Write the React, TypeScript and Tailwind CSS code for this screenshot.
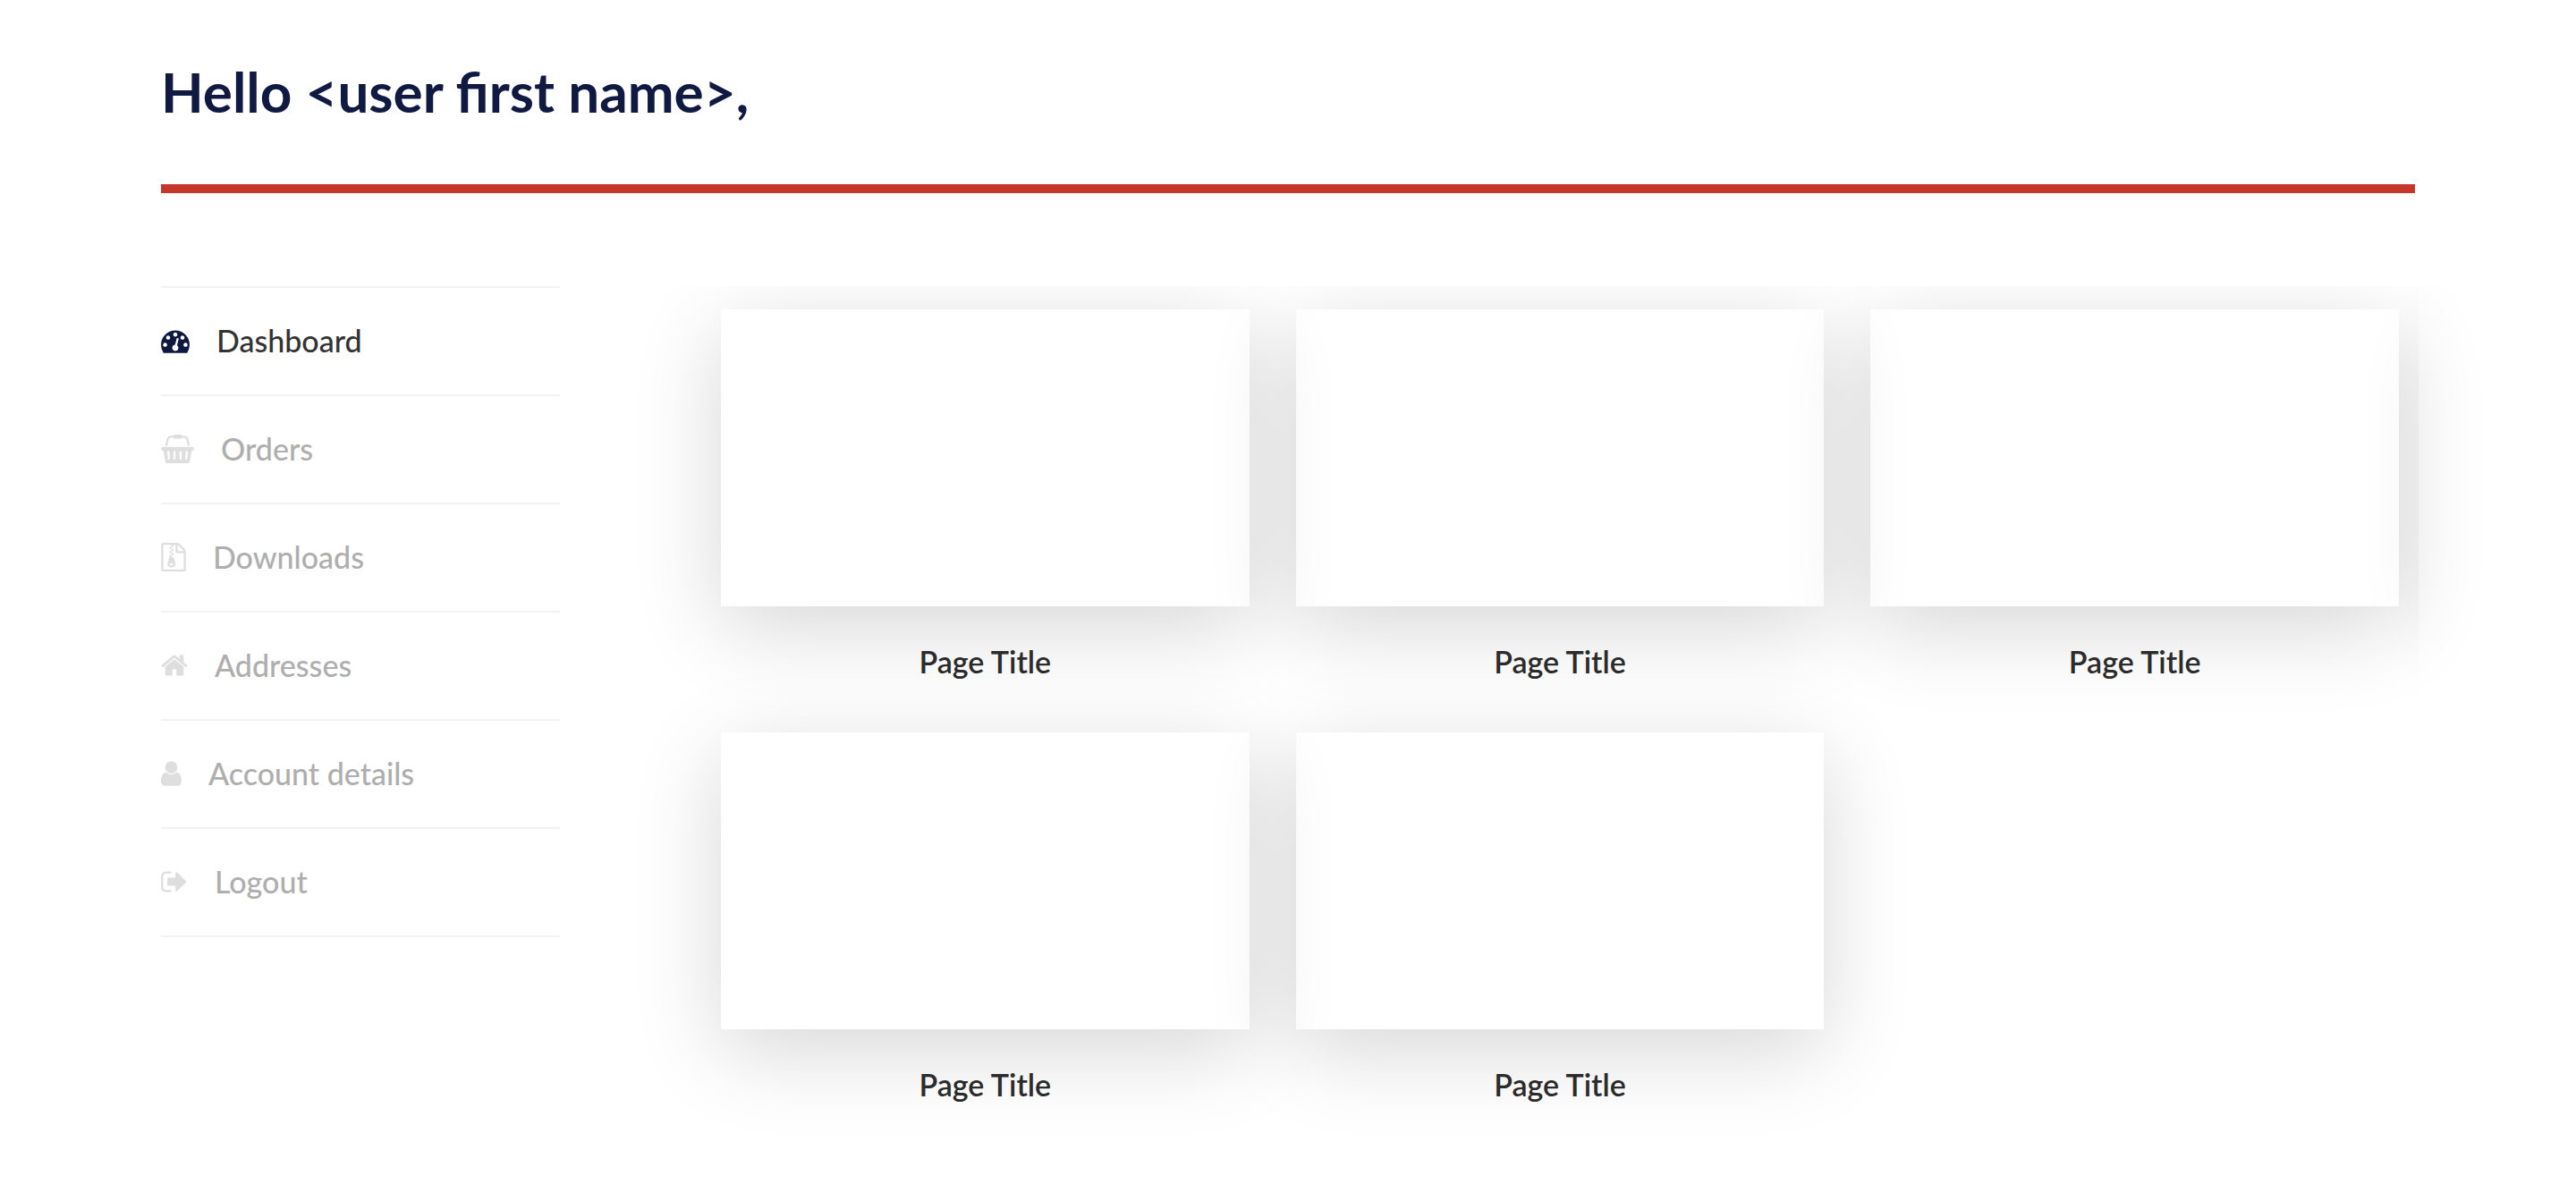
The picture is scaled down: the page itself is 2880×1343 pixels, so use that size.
type Icon = { width: number; viewBox: string; path: string };

const icons: Record<string, Icon> = {
  dashboard: {
    width: 32,
    viewBox: "0 0 1792 1792",
    path: "M384 1152q0-53-37.5-90.5t-90.5-37.5-90.5 37.5-37.5 90.5 37.5 90.5 90.5 37.5 90.5-37.5 37.5-90.5zm192-448q0-53-37.5-90.5t-90.5-37.5-90.5 37.5-37.5 90.5 37.5 90.5 90.5 37.5 90.5-37.5 37.5-90.5zm428 481l101-382q6-26-7.5-48.5t-38.5-29.5-48 6.5-30 39.5l-101 382q-60 5-107 43.5t-63 98.5q-20 77 20 146t117 89 146-20 89-117q16-60-6-117t-72-91zm660-33q0-53-37.5-90.5t-90.5-37.5-90.5 37.5-37.5 90.5 37.5 90.5 90.5 37.5 90.5-37.5 37.5-90.5zm-640-640q0-53-37.5-90.5t-90.5-37.5-90.5 37.5-37.5 90.5 37.5 90.5 90.5 37.5 90.5-37.5 37.5-90.5zm448 192q0-53-37.5-90.5t-90.5-37.5-90.5 37.5-37.5 90.5 37.5 90.5 90.5 37.5 90.5-37.5 37.5-90.5zm320 448q0 261-141 483-19 29-54 29h-1402q-35 0-54-29-141-221-141-483 0-182 71-348t191-286 286-191 348-71 348 71 286 191 191 286 71 348z",
  },
  basket: {
    width: 37,
    viewBox: "0 0 2048 1792",
    path: "M1920 768q53 0 90.5 37.5t37.5 90.5-37.5 90.5-90.5 37.5h-15l-115 662q-8 46-44 76t-82 30h-1280q-46 0-82-30t-44-76l-115-662h-15q-53 0-90.5-37.5t-37.5-90.5 37.5-90.5 90.5-37.5h1792zm-1435 800q26-2 43.5-22.5t15.5-46.5l-32-416q-2-26-22.5-43.5t-46.5-15.5-43.5 22.5-15.5 46.5l32 416q2 25 20.5 42t43.5 17h5zm411-64v-416q0-26-19-45t-45-19-45 19-19 45v416q0 26 19 45t45 19 45-19 19-45zm384 0v-416q0-26-19-45t-45-19-45 19-19 45v416q0 26 19 45t45 19 45-19 19-45zm352 5l32-416q2-26-15.5-46.5t-43.5-22.5-46.5 15.5-22.5 43.5l-32 416q-2 26 15.5 46.5t43.5 22.5h5q25 0 43.5-17t20.5-42zm-1156-1217l-93 412h-132l101-441q19-88 89-143.5t160-55.5h167q0-26 19-45t45-19h384q26 0 45 19t19 45h167q90 0 160 55.5t89 143.5l101 441h-132l-93-412q-11-44-45.5-72t-79.5-28h-167q0 26-19 45t-45 19h-384q-26 0-45-19t-19-45h-167q-45 0-79.5 28t-45.5 72z",
  },
  archive: {
    width: 28,
    viewBox: "128 0 1536 1792",
    path: "M768 384v-128h-128v128h128zm128 128v-128h-128v128h128zm-128 128v-128h-128v128h128zm128 128v-128h-128v128h128zm700-388q28 28 48 76t20 88v1152q0 40-28 68t-68 28h-1344q-40 0-68-28t-28-68v-1600q0-40 28-68t68-28h896q40 0 88 20t76 48zm-444-244v376h376q-10-29-22-41l-313-313q-12-12-41-22zm384 1528v-1024h-416q-40 0-68-28t-28-68v-416h-128v128h-128v-128h-512v1536h1280zm-627-721l107 349q8 27 8 52 0 83-72.5 137.5t-183.5 54.5-183.5-54.5-72.5-137.5q0-25 8-52 21-63 120-396v-128h128v128h79q22 0 39 13t23 34zm-141 465q53 0 90.5-19t37.5-45-37.5-45-90.5-19-90.5 19-37.5 45 37.5 45 90.5 19z",
  },
  home: {
    width: 30,
    viewBox: "64 0 1664 1792",
    path: "M1472 992v480q0 26-19 45t-45 19h-384v-384h-256v384h-384q-26 0-45-19t-19-45v-480q0-1 .5-3t.5-3l575-474 575 474q1 2 1 6zm223-69l-62 74q-8 9-21 11h-3q-13 0-21-7l-692-577-692 577q-12 8-24 7-13-2-21-11l-62-74q-8-10-7-23.5t11-21.5l719-599q32-26 76-26t76 26l244 204v-195q0-14 9-23t23-9h192q14 0 23 9t9 23v408l219 182q10 8 11 21.5t-7 23.5z",
  },
  user: {
    width: 23,
    viewBox: "256 0 1280 1792",
    path: "M1536 1399q0 109-62.5 187t-150.5 78h-854q-88 0-150.5-78t-62.5-187q0-85 8.5-160.5t31.5-152 58.5-131 94-89 134.5-34.5q131 128 313 128t313-128q76 0 134.5 34.5t94 89 58.5 131 31.5 152 8.5 160.5zm-256-887q0 159-112.5 271.5t-271.5 112.5-271.5-112.5-112.5-271.5 112.5-271.5 271.5-112.5 271.5 112.5 112.5 271.5z",
  },
  signOut: {
    width: 30,
    viewBox: "64 0 1664 1792",
    path: "M704 1440q0 4 1 20t.5 26.5-3 23.5-10 19.5-20.5 6.5h-320q-119 0-203.5-84.5t-84.5-203.5v-704q0-119 84.5-203.5t203.5-84.5h320q13 0 22.5 9.5t9.5 22.5q0 4 1 20t.5 26.5-3 23.5-10 19.5-20.5 6.5h-320q-66 0-113 47t-47 113v704q0 66 47 113t113 47h312l11.5 1 11.5 3 8 5.5 7 9 2 13.5zm928-544q0 26-19 45l-544 544q-19 19-45 19t-45-19-19-45v-288h-448q-26 0-45-19t-19-45v-384q0-26 19-45t45-19h448v-288q0-26 19-45t45-19 45 19l544 544q19 19 19 45z",
  },
};

const links = [
  { label: "Dashboard", icon: icons.dashboard, active: true },
  { label: "Orders", icon: icons.basket },
  { label: "Downloads", icon: icons.archive },
  { label: "Addresses", icon: icons.home },
  { label: "Account details", icon: icons.user },
  { label: "Logout", icon: icons.signOut },
];

const cards = [1, 2, 3, 4, 5];

function NavIcon({ icon, className }: { icon: Icon; className: string }) {
  return (
    <svg
      aria-hidden="true"
      width={icon.width}
      height={32}
      viewBox={icon.viewBox}
      className={`shrink-0 fill-current ${className}`}
    >
      <path d={icon.path} />
    </svg>
  );
}

function PageCard({ edge }: { edge: boolean }) {
  return (
    <li className="relative">
      <a href="#" className="block">
        <span className="block h-[332px] shadow-[0_24px_92px_rgba(0,0,0,0.16)]" />
        <span className="mt-10 block text-center text-[34px]/[44px] font-semibold text-[#2b2b2b]">
          Page Title
        </span>
      </a>
      {edge && (
        <span
          aria-hidden="true"
          className="pointer-events-none absolute -top-[26px] -right-[22px] bottom-[-20px] left-0 overflow-hidden"
        >
          <span className="absolute top-[26px] left-full ml-[30px] h-[332px] w-full shadow-[0_24px_92px_rgba(0,0,0,0.12)]" />
        </span>
      )}
    </li>
  );
}

export default function App() {
  return (
    <div className="min-h-screen bg-white font-['Lato',sans-serif]">
      <header className="px-[180px] pt-[62px]">
        <h1 className="text-[62px]/[80px] font-bold text-[#0f1941]">
          Hello &lt;user first name&gt;,
        </h1>
        <div className="mt-16 h-[10px] bg-[#c63629]" />
      </header>

      <main className="mt-[104px] flex items-start gap-[180px] overflow-hidden pr-[198px] pb-[60px] pl-[180px]">
        <nav aria-label="Account" className="w-[446px] shrink-0">
          <ul className="border-t-2 border-[#f2f2f2]">
            {links.map((link) => (
              <li key={link.label} className="border-b-2 border-[#f2f2f2]">
                <a
                  href="#"
                  aria-current={link.active ? "page" : undefined}
                  className={`flex items-center gap-[30px] pt-[37px] pb-[38px] text-[34px]/[44px] font-medium ${
                    link.active ? "text-[#333333]" : "text-[#aeaeae]"
                  }`}
                >
                  <NavIcon
                    icon={link.icon}
                    className={link.active ? "text-[#0f193f]" : "text-[#dedede]"}
                  />
                  {link.label}
                </a>
              </li>
            ))}
          </ul>
        </nav>

        <ul className="grid flex-1 grid-cols-3 gap-x-[52px] gap-y-[57px] pt-[26px]">
          {cards.map((card) => (
            <PageCard key={card} edge={card === 3} />
          ))}
        </ul>
      </main>
    </div>
  );
}
